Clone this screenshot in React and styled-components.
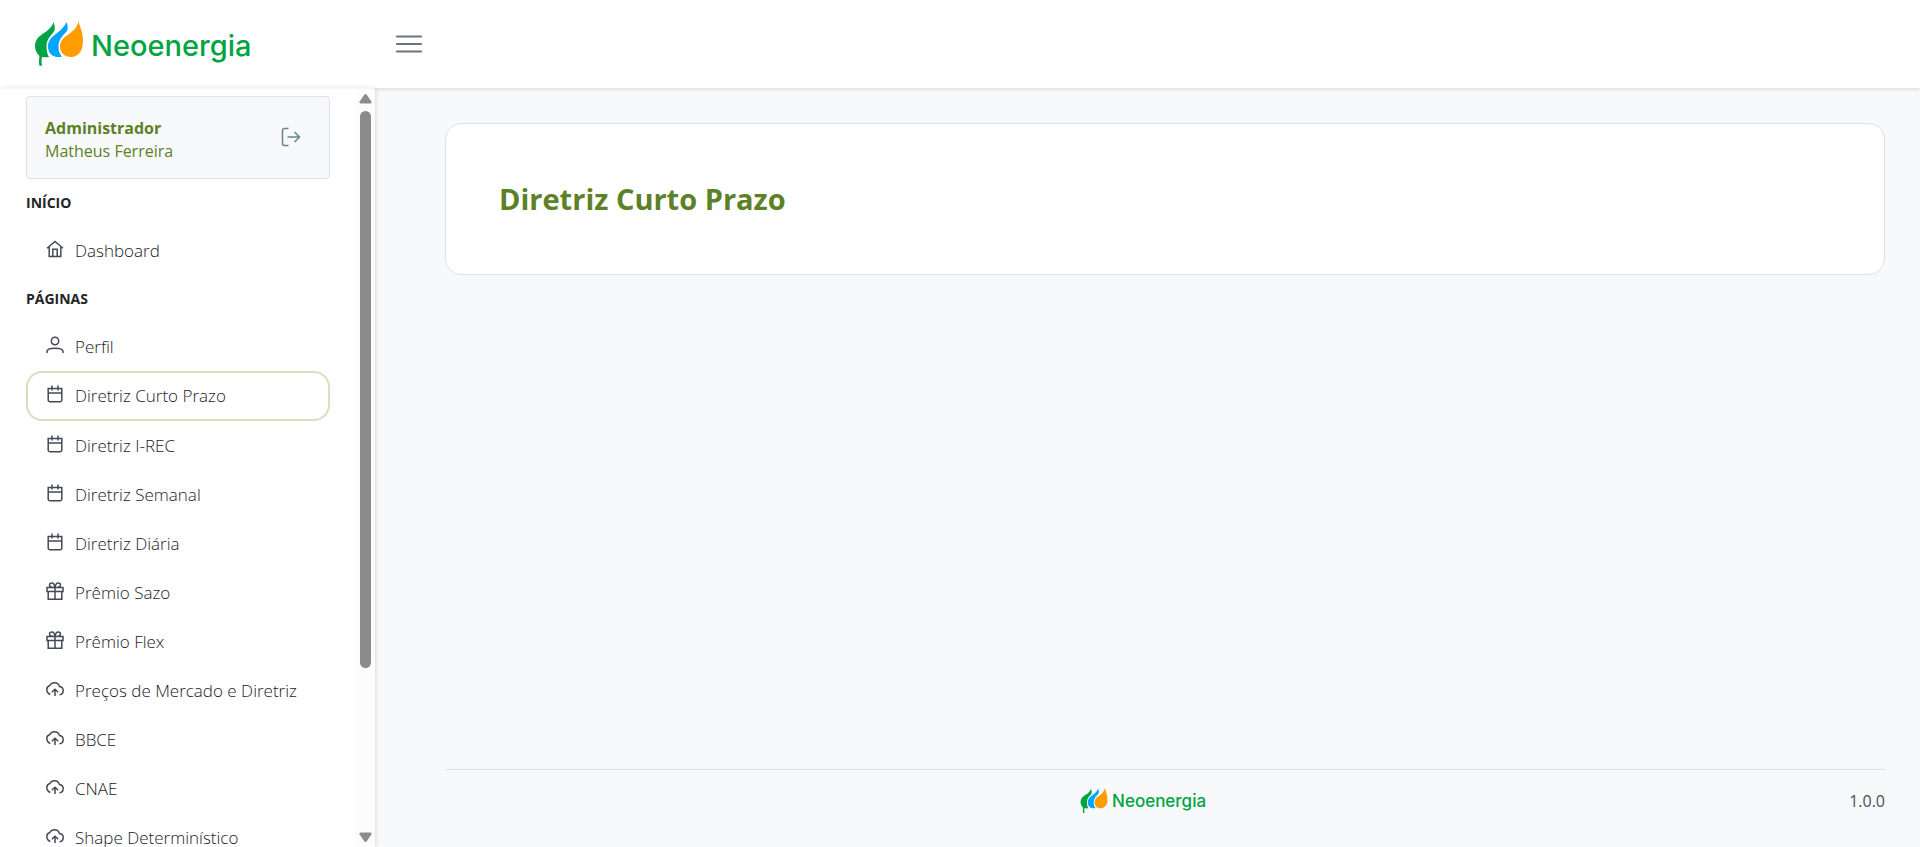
import React from "react";
import styled, { createGlobalStyle, css } from "styled-components";

const GlobalStyle = createGlobalStyle`
  *, *::before, *::after { box-sizing: border-box; }
  body {
    margin: 0;
    background: #f8f9fb;
    color: #4a4f57;
    font-family: "Segoe UI", "Open Sans", "Noto Sans", sans-serif;
    font-size: 16px;
    line-height: 24px;
  }
`;

const Shell = styled.div`
  display: grid;
  grid-template-columns: 375px minmax(0, 1fr);
  grid-template-rows: 88px minmax(0, 1fr);
  height: 100vh;
`;

const Header = styled.header`
  grid-column: 1 / -1;
  display: flex;
  align-items: center;
  background: #fff;
  box-shadow: 0 1px 4px rgba(0, 0, 0, 0.14);
`;

const Brand = styled.a`
  display: flex;
  width: 375px;
  padding: 4px 0 0 34px;
  text-decoration: none;
`;

const LogoBox = styled.span`
  display: inline-flex;
  align-items: flex-start;
  gap: ${(p) => (p.$small ? 4 : 7)}px;
  svg {
    width: ${(p) => (p.$small ? 28 : 50)}px;
    height: ${(p) => (p.$small ? 26 : 46)}px;
  }
`;

const LogoWord = styled.span`
  color: #00a443;
  font-family: Inter, sans-serif;
  font-weight: 500;
  font-size: ${(p) => (p.$small ? 17 : 29)}px;
  line-height: ${(p) => (p.$small ? 26 : 50)}px;
`;

const MenuButton = styled.button`
  display: grid;
  place-items: center;
  margin-left: 16px;
  padding: 4px;
  border: 0;
  background: none;
  color: #6c757d;
`;

const Sidebar = styled.aside`
  position: relative;
  display: flex;
  min-height: 0;
  background: #fff;
  box-shadow: 1px 0 4px rgba(0, 0, 0, 0.12);
  border-top: 1px solid #f5f5f6;
`;

const SidebarBody = styled.div`
  flex: 1;
  min-width: 0;
  overflow: hidden;
  padding: 7px 26px 0;
`;

const UserCard = styled.section`
  display: flex;
  align-items: center;
  justify-content: space-between;
  height: 83px;
  padding: 0 28px 0 18px;
  border: 1px solid #dee2e6;
  border-radius: 4px;
  background: #f8f9fb;
  color: #5c8127;
  line-height: 23px;
`;

const UserName = styled.div`
  display: flex;
  flex-direction: column;
  padding-top: 4px;
`;

const IconButton = styled.button`
  display: grid;
  padding: 0 0 2px;
  border: 0;
  background: none;
  color: #6a8490;
`;

const SectionTitle = styled.h2`
  margin: 0;
  padding: 12px 0 11px;
  color: #212529;
  font-size: 14px;
  font-weight: 700;
  line-height: 24px;
  text-transform: uppercase;
`;

const NavList = styled.ul`
  margin: 0;
  padding: 0;
  list-style: none;
`;

const NavLink = styled.a`
  display: flex;
  align-items: center;
  gap: 11px;
  height: 49px;
  padding: 0 18px;
  border: 2px solid transparent;
  border-radius: 16px;
  color: #1c2128;
  font-size: 17px;
  font-weight: 300;
  text-decoration: none;
  white-space: nowrap;
  svg { flex: none; margin-bottom: 4px; color: #444a53; }
  ${(p) => p.$active && css`
    height: 50px;
    border-color: #d3e2bb;
  `}
`;

const ScrollTrack = styled.div`
  display: flex;
  flex-direction: column;
  align-items: center;
  width: 19px;
  padding: 4px 0;
  background: #fcfcfc;
  color: #8b8b8b;
`;

const ScrollLane = styled.div`
  flex: 1;
  width: 11px;
  margin: 7px 0;
`;

const ScrollThumb = styled.div`
  height: 78%;
  border-radius: 6px;
  background: #8b8b8b;
`;

const Main = styled.main`
  display: flex;
  flex-direction: column;
  min-width: 0;
  padding: 35px 35px 0 70px;
`;

const Card = styled.section`
  padding: 55px 53px;
  border: 1px solid #dee2e6;
  border-radius: 16px;
  background: #fff;
`;

const PageTitle = styled.h1`
  margin: 0;
  color: #5c8127;
  font-size: 29px;
  font-weight: 700;
  line-height: 40px;
`;

const Footer = styled.footer`
  display: flex;
  align-items: center;
  height: 78px;
  margin-top: auto;
  padding-bottom: 16px;
  border-top: 1px solid #dee2e6;
`;

const FooterLogo = styled.div`
  display: flex;
  flex: 1;
  justify-content: center;
  padding-right: 8px;
`;

function Logo({ small }) {
  return (
    <LogoBox $small={small}>
      <svg viewBox="0 0 50 46" aria-hidden="true">
        <path fill="#00a443" d="M19.5 1c1.6 4 1.700 7.500.5 9.500-3 4.500-7.500 7-7.500 15 0 4.500.8 7.500 2.500 10.500-2.500.5-5 .2-7 0-.7 3-.6 6 0 8.500L5.500 45c-.7-3.500-.6-6.500 0-10C2.700 32.500 1 29 1 25c0-6 3.500-9.500 9-13 4.500-3 8-6 9.500-11z" />
        <path fill="#00a5ff" d="M32.500 1c1.500 3.700 1.600 7 .5 9-3.500 4-8.500 8-8.500 15.500 0 4 .8 7.500 3.500 10.200-8 1.800-14-2.500-14-10.200 0-6.500 4-9.500 9-13.500 4-3 7.500-6.500 9.500-11z" />
        <path fill="#ff9c00" d="M44.500 0c1 5 4.500 11 4.500 19.500C49 31 43.500 36 37 36c-6.500 0-11-4.500-11-10.500 0-6 4-9.500 9-12.500 5-3.500 8.500-7 9.500-13z" />
      </svg>
      <LogoWord $small={small}>Neoenergia</LogoWord>
    </LogoBox>
  );
}

const shapes = {
  home: <><path d="M1 8.200 9 1.500l8 6.700" /><path d="M3.200 7v9.500h11.600V7" /><path d="M6.800 16.500V9.300h4.400v7.200" /></>,
  user: <><circle cx="9" cy="5" r="3.700" /><path d="M1 17v-1.500C1 13 4 12.300 9 12.300s8 .7 8 3.200V17" /></>,
  calendar: <><path d="M2.200 3.500h13.600V15a1.800 1.800 0 0 1-1.800 1.800H4A1.800 1.800 0 0 1 2.200 15zM2.200 8h13.600M6 .5v5M12 .5v5" /></>,
  gift: <><path d="M1 5.500h16v4H1zM2.200 9.500v7.700h13.600V9.500M9 5.500v11.700M9 5.500C5 5.500 3.500 4.500 3.500 3S5 1 6 1s2.500 1.500 3 4.500c.5-3 2-4.500 3-4.500s2.500.5 2.500 2-1.500 2.500-5.500 2.500z" /></>,
  upload: <><path d="M4.300 14.500C2 13.500.8 11.800.8 9.500c0-2 1.200-3.500 3-4C4.800 3.700 6.500 2.800 8.500 2.800c2.500 0 4.300 1.500 5 3.700 2.200.4 3.700 1.800 3.700 4s-1.500 4-3.700 4.200" /><path d="M9 16V9.500M5.800 12.200 9 9.200l3.200 3" /></>,
};

function Icon({ name }) {
  return (
    <svg width="18" height="18" viewBox="0 0 18 18" fill="none" stroke="currentColor" strokeWidth="1.5" aria-hidden="true">
      {shapes[name]}
    </svg>
  );
}

const pages = [
  ["user", "Perfil"],
  ["calendar", "Diretriz Curto Prazo"],
  ["calendar", "Diretriz I-REC"],
  ["calendar", "Diretriz Semanal"],
  ["calendar", "Diretriz Diária"],
  ["gift", "Prêmio Sazo"],
  ["gift", "Prêmio Flex"],
  ["upload", "Preços de Mercado e Diretriz"],
  ["upload", "BBCE"],
  ["upload", "CNAE"],
  ["upload", "Shape Determinístico"],
];

function NavItem({ icon, label, active }) {
  return (
    <li>
      <NavLink href="#" $active={active} aria-current={active ? "page" : undefined}>
        <Icon name={icon} />
        {label}
      </NavLink>
    </li>
  );
}

export default function App() {
  return (
    <>
      <GlobalStyle />
      <Shell>
        <Header>
          <Brand href="#"><Logo /></Brand>
          <MenuButton type="button" aria-label="Menu">
            <svg width="28" height="20" viewBox="0 0 28 20" fill="none" stroke="currentColor" strokeWidth="2.200" strokeLinecap="round">
              <path d="M2 2.500h24M2 10h24M2 17.500h24" />
            </svg>
          </MenuButton>
        </Header>
        <Sidebar>
          <SidebarBody>
            <UserCard>
              <UserName>
                <strong>Administrador</strong>
                <span>Matheus Ferreira</span>
              </UserName>
              <IconButton type="button" aria-label="Sair">
                <svg width="20" height="20" viewBox="0 0 20 20" fill="none" stroke="currentColor" strokeWidth="1.500">
                  <path d="M7.500 1.500H3.500a2 2 0 0 0-2 2v13a2 2 0 0 0 2 2h4M6.500 10h12M13.500 5l5 5-5 5" />
                </svg>
              </IconButton>
            </UserCard>
            <nav>
              <SectionTitle>Início</SectionTitle>
              <NavList>
                <NavItem icon="home" label="Dashboard" />
              </NavList>
              <SectionTitle>Páginas</SectionTitle>
              <NavList>
                {pages.map(([icon, label]) => (
                  <NavItem key={label} icon={icon} label={label} active={label === "Diretriz Curto Prazo"} />
                ))}
              </NavList>
            </nav>
          </SidebarBody>
          <ScrollTrack aria-hidden="true">
            <svg width="13" height="11" viewBox="0 0 13 11" fill="currentColor"><path d="M5.500 1.500Q6.500.3 7.500 1.500l5 7.300Q13 10.500 11.500 10.500h-10Q0 10.500.5 8.800z" /></svg>
            <ScrollLane><ScrollThumb /></ScrollLane>
            <svg width="13" height="11" viewBox="0 0 13 11" fill="currentColor"><path d="M5.500 9.500q1 1.200 2 0l5-7.300Q13 .5 11.500.5h-10Q0 .5.5 2.200z" /></svg>
          </ScrollTrack>
        </Sidebar>
        <Main>
          <Card><PageTitle>Diretriz Curto Prazo</PageTitle></Card>
          <Footer>
            <FooterLogo><Logo small /></FooterLogo>
            <span>1.0.0</span>
          </Footer>
        </Main>
      </Shell>
    </>
  );
}
